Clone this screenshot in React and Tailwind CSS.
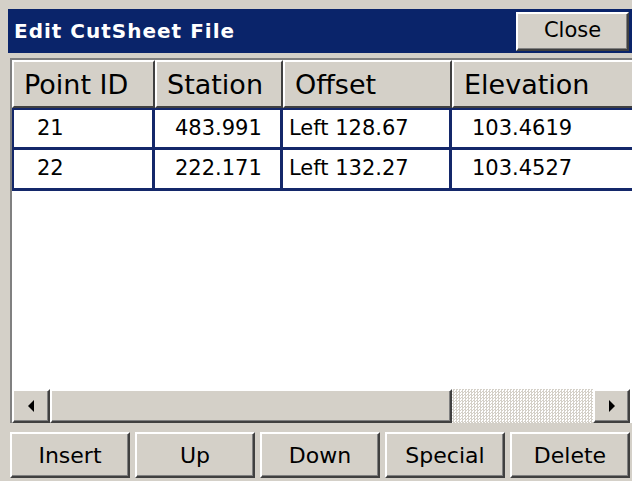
import React from "react";

const raised =
  "border-2 border-t-white border-l-white border-r-[#404040] border-b-[#404040] shadow-[inset_-1px_-1px_0_#808080] bg-[#d4d0c8]";

const columns = [
  { key: "id", label: "Point ID", width: "w-[143px]", pad: "pl-[23px]" },
  { key: "station", label: "Station", width: "w-[128px]", pad: "pl-[20px]" },
  { key: "offset", label: "Offset", width: "w-[169px]", pad: "pl-[6px]" },
  { key: "elevation", label: "Elevation", width: "w-[200px]", pad: "pl-[20px]" },
];

const points = [
  { id: "21", station: "483.991", offset: "Left 128.67", elevation: "103.4619" },
  { id: "22", station: "222.171", offset: "Left 132.27", elevation: "103.4527" },
];

const actions = ["Insert", "Up", "Down", "Special", "Delete"];

function Arrow({ dir }) {
  return (
    <svg width="8" height="12" viewBox="0 0 8 12">
      {dir === "left" ? (
        <polygon points="7,0 7,12 1,6" fill="#000" />
      ) : (
        <polygon points="1,0 1,12 7,6" fill="#000" />
      )}
    </svg>
  );
}

export default function App() {
  return (
    <div className="w-[632px] h-[481px] overflow-hidden bg-[#d4d0c8] pl-[8px] pt-[9px] font-['DejaVu_Sans',sans-serif] text-black">
      {/* title bar */}
      <div className="h-[44px] bg-[#0a246a] flex items-center justify-between pl-[6px] pr-[3px]">
        <span className="text-white font-bold text-[20px] tracking-[1px]">Edit CutSheet File</span>
        <button className={`${raised} w-[113px] h-[39px] text-[21px] flex items-center justify-center`}>
          Close
        </button>
      </div>

      {/* cut sheet list */}
      <div className="mt-[5px] ml-[2px] h-[365px] border-t-2 border-l-2 border-[#808080] bg-white flex flex-col overflow-hidden">
        <div className="flex h-[48px] shrink-0">
          {columns.map((c) => (
            <div
              key={c.key}
              className={`${c.width} shrink-0 ${raised} shadow-none border-b-[#303030] flex items-center pl-[10px] text-[27px] leading-none`}
            >
              {c.label}
            </div>
          ))}
        </div>

        {points.map((p, i) => (
          <div
            key={p.id}
            className={`flex h-[41px] shrink-0 border-b-[3px] border-[#14286a] ${i === 0 ? "h-[42px] border-t-[2px]" : ""}`}
          >
            {columns.map((c, j) => (
              <div
                key={c.key}
                className={`${c.width} shrink-0 ${c.pad} flex items-center text-[21px] border-[#14286a] ${j < 3 ? "border-r-[3px]" : ""} ${j === 0 ? "border-l-[2px]" : ""}`}
              >
                {p[c.key]}
              </div>
            ))}
          </div>
        ))}

        <div className="flex-1" />

        {/* horizontal scroll bar */}
        <div className="h-[34px] shrink-0 flex pr-[2px]">
          <div className={`${raised} w-[38px] flex items-center justify-center`}>
            <Arrow dir="left" />
          </div>
          <div className={`${raised} w-[402px]`} />
          <div className="flex-1 bg-[repeating-conic-gradient(#d4d0c8_0_25%,#ffffff_0_50%)] bg-[length:3px_3px]" />
          <div className={`${raised} w-[37px] flex items-center justify-center`}>
            <Arrow dir="right" />
          </div>
        </div>
      </div>

      {/* action buttons */}
      <div className="mt-[9px] ml-[2px] flex gap-[5px]">
        {actions.map((a) => (
          <button
            key={a}
            className={`${raised} w-[120px] h-[46px] shrink-0 text-[22px] flex items-center justify-center`}
          >
            {a}
          </button>
        ))}
      </div>
    </div>
  );
}
